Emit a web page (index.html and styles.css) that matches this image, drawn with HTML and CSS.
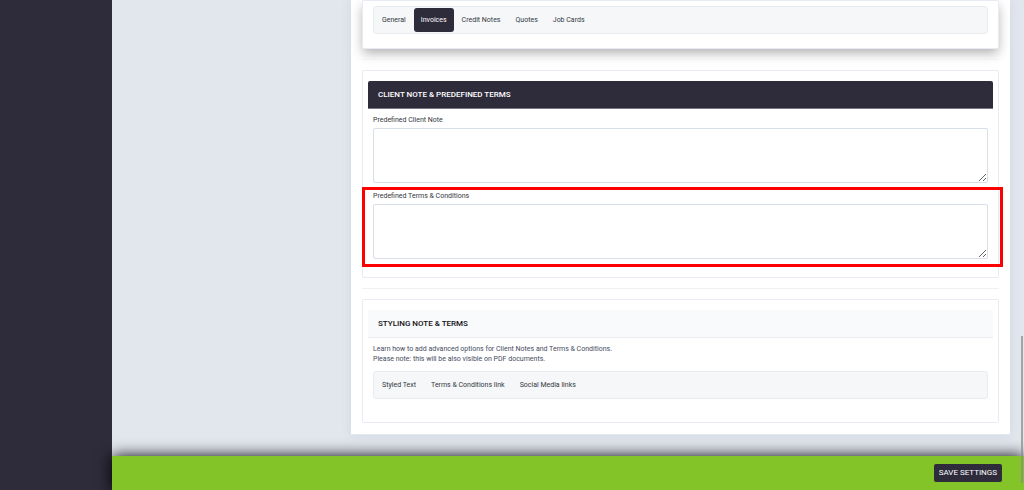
FILE: index.html
```html
<!DOCTYPE html>
<html lang="en">
<head>
<meta charset="utf-8">
<title>Settings</title>
<link rel="stylesheet" href="styles.css">
</head>
<body>
<div class="app">
  <aside class="sidebar"></aside>
  <form class="workspace">
    <main class="content">
      <div class="panel">
        <section class="card card-tabs">
          <nav class="tabs">
            <a class="tab" href="#general">General</a>
            <a class="tab tab-active" href="#invoices">Invoices</a>
            <a class="tab" href="#credit-notes">Credit Notes</a>
            <a class="tab" href="#quotes">Quotes</a>
            <a class="tab" href="#job-cards">Job Cards</a>
          </nav>
        </section>
        <hr class="divider">
        <section class="card card-notes">
          <h2 class="heading heading-dark">CLIENT NOTE &amp; PREDEFINED TERMS</h2>
          <div class="field">
            <label class="label" for="client-note">Predefined Client Note</label>
            <textarea class="textarea" id="client-note"></textarea>
          </div>
          <div class="field field-marked">
            <label class="label" for="terms">Predefined Terms &amp; Conditions</label>
            <textarea class="textarea" id="terms"></textarea>
          </div>
        </section>
        <hr class="divider">
        <section class="card card-styling">
          <h2 class="heading">STYLING NOTE &amp; TERMS</h2>
          <p class="help">Learn how to add advanced options for Client Notes and Terms &amp; Conditions.<br>Please note: this will be also visible on PDF documents.</p>
          <nav class="tabs">
            <a class="tab" href="#styled-text">Styled Text</a>
            <a class="tab" href="#terms-link">Terms &amp; Conditions link</a>
            <a class="tab" href="#social-links">Social Media links</a>
          </nav>
        </section>
      </div>
    </main>
    <footer class="actions">
      <button class="save" type="submit">SAVE SETTINGS</button>
    </footer>
  </form>
  <div class="scroll-thumb"></div>
</div>
</body>
</html>
```
FILE: styles.css
```css
* {
  box-sizing: border-box;
}

body {
  margin: 0;
  font-family: Roboto, "Liberation Sans", sans-serif;
  font-size: 7px;
  line-height: 10px;
  color: #333740;
  background: #e2e7ee;
}

.app {
  position: relative;
  display: grid;
  grid-template-columns: 112px 1fr;
  min-height: 100vh;
  overflow: hidden;
}

.sidebar {
  background: #2e2b3b;
}

.workspace {
  display: flex;
  flex-direction: column;
}

.content {
  flex: 1;
  padding: 0 14px 20px 239px;
}

.panel {
  padding: 0 11px 11px;
  background: #fff;
  border-bottom: 1px solid #e4e8f2;
  box-shadow: 0 0 10px rgba(70, 90, 130, 0.12);
}

.card {
  border: 1px solid #e8ebf3;
  border-radius: 2px;
  background: #fff;
}

.card-tabs {
  padding: 5px 10px 14px;
  box-shadow: 0 5px 12px -1px rgba(0, 0, 0, 0.32);
}

.card-notes {
  padding: 10px 5px 18px;
}

.card-styling {
  padding: 10px 5px 23px;
}

.card-styling .tabs {
  margin: 0 5px;
}

.tabs {
  display: flex;
  gap: 1px;
  padding: 1px;
  background: #f5f7f9;
  border: 1px solid #e9ecef;
  border-radius: 3px;
}

.tab {
  padding: 7px;
  border-radius: 3px;
  color: #333740;
  text-decoration: none;
}

.tab-active {
  color: #fff;
  background: #2e2b3b;
}

.divider {
  height: 1px;
  margin: 10px 0;
  border: 0;
  background: #f0f1f3;
}

.heading {
  margin: 0;
  padding: 9px 10px 8px;
  font-size: 8px;
  line-height: 10px;
  font-weight: 500;
  color: #101014;
  background: #f9fafb;
  border-bottom: 1px solid #e9ebef;
}

.heading-dark {
  color: #fff;
  background: #2e2b3b;
  border-bottom-color: #77757f;
  border-radius: 2px 2px 0 0;
}

.field {
  position: relative;
  margin: 0 5px;
  padding-top: 6px;
}

.field + .field {
  margin-top: 2px;
}

.label {
  display: block;
  margin-bottom: 3px;
}

.textarea {
  display: block;
  width: 100%;
  height: 55px;
  padding: 4px;
  border: 1px solid #d9dfe9;
  border-radius: 2px;
  background: #fff;
  font: inherit;
  resize: vertical;
}

.field-marked::after {
  content: "";
  position: absolute;
  inset: 2px -15px -8px -11px;
  border: 3px solid #fe0000;
  pointer-events: none;
}

.help {
  margin: 6px 5px 7px;
  color: #454c60;
}

.actions {
  display: flex;
  justify-content: flex-end;
  padding: 8px 22px;
  background: #83c528;
  box-shadow: 0 0 16px #000;
}

.save {
  height: 18px;
  padding: 0 5px;
  border: 0;
  border-radius: 2px;
  color: #fff;
  background: #2e2b3b;
  font: inherit;
  font-size: 8px;
}

.scroll-thumb {
  position: absolute;
  right: 1px;
  bottom: 7px;
  width: 2px;
  height: 30%;
  background: rgba(135, 135, 135, 0.7);
}
```
